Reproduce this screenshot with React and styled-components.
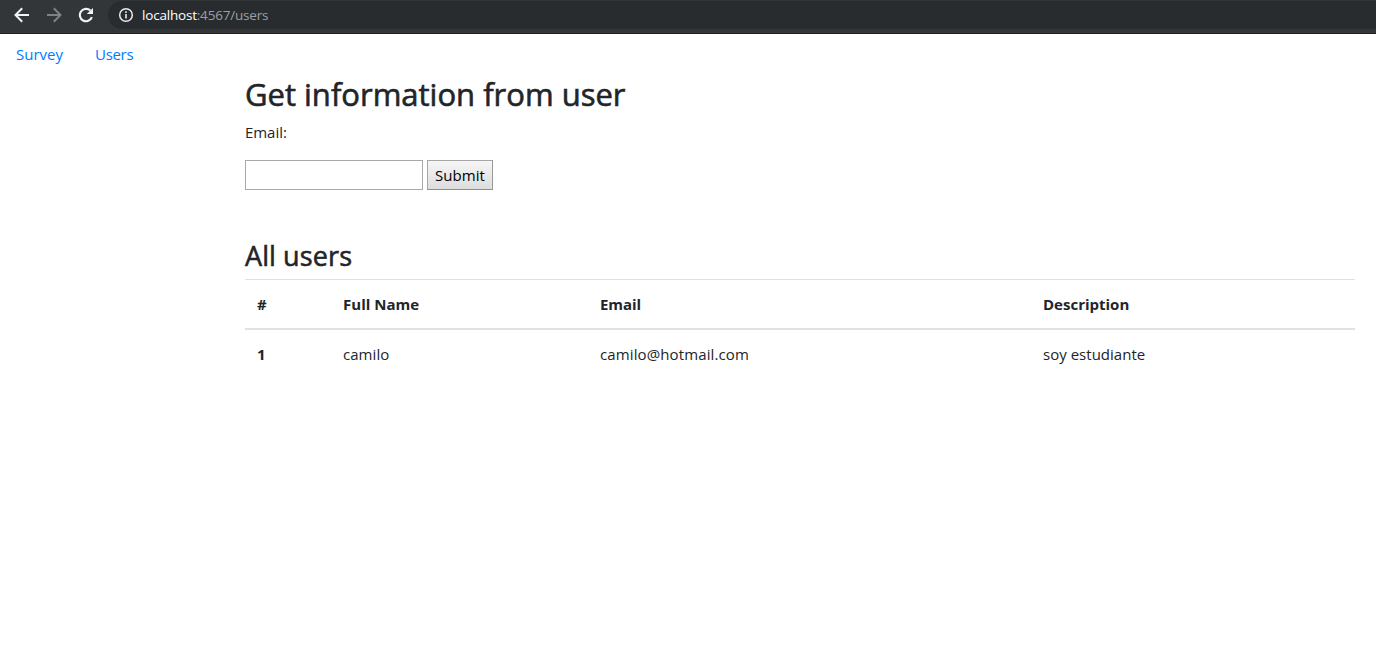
import React from "react";
import styled, { createGlobalStyle } from "styled-components";

const GlobalStyle = createGlobalStyle`
  *, *::before, *::after { box-sizing: border-box; }
  body {
    margin: 0;
    background: #fff;
    color: #212529;
    font-family: "Segoe UI", "Open Sans", "Noto Sans", sans-serif;
    font-size: 15px;
    line-height: 24px;
  }
`;

const BrowserBar = styled.header`
  display: flex;
  align-items: flex-start;
  height: 34px;
  padding-top: 1px;
  background: #323639;
  border-bottom: 1px solid #231f27;
`;

const Controls = styled.div`
  display: flex;
  gap: 16px;
  padding: 6px 14px 0;
  svg { display: block; }
`;

const AddressBar = styled.div`
  display: flex;
  align-items: center;
  flex: 1;
  height: 28px;
  padding-left: 10px;
  border-radius: 14px 0 0 14px;
  background: #282c2f;
  color: #9aa0a6;
  font-size: 13.5px;
`;

const Url = styled.span`
  margin-left: 8px;
  letter-spacing: -0.2px;
`;

const Host = styled.span`
  color: #fff;
`;

const Nav = styled.nav`
  display: flex;
  height: 41px;
`;

const NavLink = styled.a`
  padding: 8px 16px;
  color: #007bff;
  text-decoration: none;
`;

const Track = styled.span`
  letter-spacing: ${(p) => p.$by}px;
`;

const Main = styled.main`
  width: 1110px;
  margin-left: 245px;
`;

const Title = styled.h2`
  margin: 0 0 7px;
  font-size: 31px;
  font-weight: 500;
  line-height: 38.4px;
  -webkit-text-stroke: 0.6px currentColor;
`;

const Label = styled.p`
  margin: 0 0 16px;
`;

const Form = styled.form`
  display: flex;
  gap: 4px;
  height: 30px;
  margin-bottom: 49px;
`;

const Input = styled.input`
  width: 178px;
  height: 30px;
  padding: 1px 2px;
  border: 1px solid #a9a9a9;
  background: #fff;
  font: inherit;
`;

const Submit = styled.button`
  width: 66px;
  height: 30px;
  padding: 0 0 1px;
  border: 1px solid;
  border-color: #a6a6a6 #979797 #8e8e8e #a6a6a6;
  border-radius: 0;
  background: linear-gradient(#f6f6f6, #dddddd);
  color: #000;
  font: inherit;
`;

const Subtitle = styled.h3`
  margin: 0 0 6px;
  font-size: 27px;
  font-weight: 500;
  line-height: 33.6px;
  -webkit-text-stroke: 0.55px currentColor;
`;

const Table = styled.table`
  width: 100%;
  table-layout: fixed;
  border-collapse: collapse;
`;

const HeadCell = styled.th`
  width: ${(p) => p.$w}px;
  padding: 12px;
  border-top: 1px solid #dee2e6;
  border-bottom: 2px solid #dee2e6;
  text-align: left;
  font-weight: 700;
`;

const RowHead = styled.th`
  padding: 12px;
  text-align: left;
`;

const Cell = styled.td`
  padding: 12px;
`;

const BackIcon = () => (
  <svg width="16" height="16" viewBox="0 0 16 16" fill="none" stroke="#f1f3f4" strokeWidth="2">
    <path d="M15 8H2M8.2 1.3 1.5 8l6.7 6.7" />
  </svg>
);

const ForwardIcon = () => (
  <svg width="16" height="16" viewBox="0 0 16 16" fill="none" stroke="#7f8284" strokeWidth="2">
    <path d="M1 8h13M7.8 1.3 14.5 8l-6.7 6.7" />
  </svg>
);

const ReloadIcon = () => (
  <svg width="16" height="16" viewBox="0 0 16 16">
    <path d="M13.9 10.2A6.2 6.2 0 1 1 12.4 3.6" fill="none" stroke="#f1f3f4" strokeWidth="2.1" />
    <path d="M15 .9v6.2H8.8z" fill="#f1f3f4" />
  </svg>
);

const InfoIcon = () => (
  <svg width="16" height="16" viewBox="0 0 16 16">
    <circle cx="8" cy="8" r="6.3" fill="none" stroke="#e8eaed" strokeWidth="1.5" />
    <path d="M7.2 7h1.6v4.5H7.2zM7.2 4.3h1.6v1.6H7.2z" fill="#e8eaed" />
  </svg>
);

const columns = [
  { name: "#", w: 86, by: 0 },
  { name: "Full Name", w: 257, by: 0.03 },
  { name: "Email", w: 443, by: -0.05 },
  { name: "Description", w: 324, by: 0 },
];

export default function App() {
  return (
    <>
      <GlobalStyle />
      <BrowserBar>
        <Controls>
          <BackIcon />
          <ForwardIcon />
          <ReloadIcon />
        </Controls>
        <AddressBar>
          <InfoIcon />
          <Url><Host>localhost</Host>:4567/users</Url>
        </AddressBar>
      </BrowserBar>
      <Nav>
        <NavLink href="#survey"><Track $by={0}>Survey</Track></NavLink>
        <NavLink href="#users"><Track $by={-0.3}>Users</Track></NavLink>
      </Nav>
      <Main>
        <Title><Track $by={0}>Get information from user</Track></Title>
        <Label><Track $by={-0.05}>Email:</Track></Label>
        <Form onSubmit={(e) => e.preventDefault()}>
          <Input type="text" aria-label="Email" />
          <Submit type="submit"><Track $by={0.05}>Submit</Track></Submit>
        </Form>
        <Subtitle><Track $by={0.1}>All users</Track></Subtitle>
        <Table>
          <thead>
            <tr>
              {columns.map((c) => (
                <HeadCell key={c.name} $w={c.w}><Track $by={c.by}>{c.name}</Track></HeadCell>
              ))}
            </tr>
          </thead>
          <tbody>
            <tr>
              <RowHead>1</RowHead>
              <Cell><Track $by={0.05}>camilo</Track></Cell>
              <Cell><Track $by={0.12}>camilo@hotmail.com</Track></Cell>
              <Cell><Track $by={0.02}>soy estudiante</Track></Cell>
            </tr>
          </tbody>
        </Table>
      </Main>
    </>
  );
}
